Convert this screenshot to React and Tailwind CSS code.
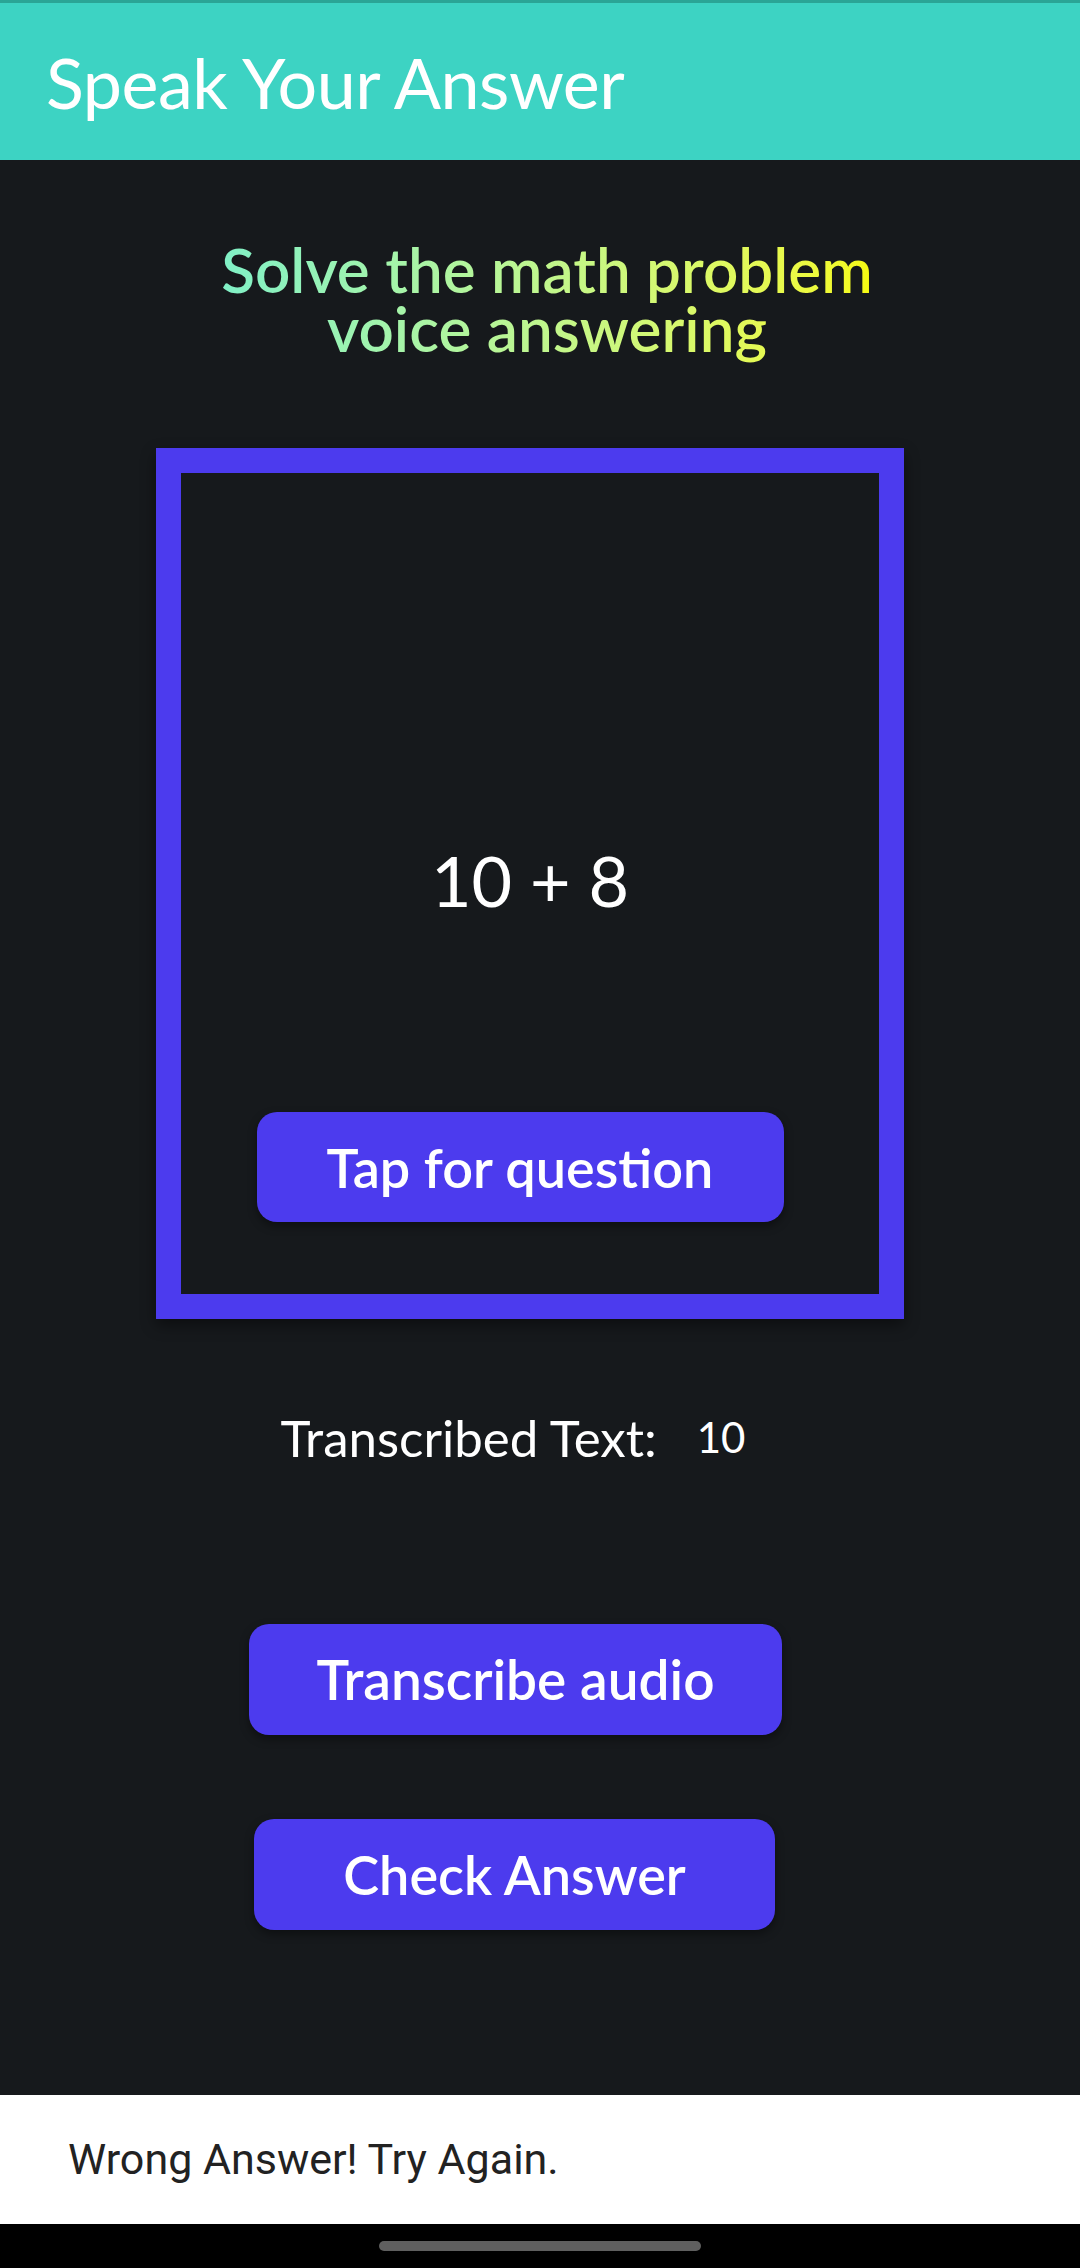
export default function App() {
  const lato = { fontFamily: 'Lato, "Open Sans", sans-serif' };
  return (
    <div className="w-[1080px] h-[2268px] flex flex-col bg-[#16191c] overflow-hidden" style={lato}>
      <div className="h-[3px] bg-[#2aa596]" />
      <div className="h-[157px] bg-[#3dd3c3] flex items-center pl-[46px] shrink-0">
        <span className="text-white text-[70px] leading-none font-normal tracking-[-0.5px]">Speak Your Answer</span>
      </div>
      <div className="flex-1 flex flex-col items-center">
        <div className="mt-[80px] ml-[14px] pb-[14px] text-center text-[62px] leading-[59px] font-semibold bg-gradient-to-r from-[#80f0c6] to-[#f6fa08] bg-clip-text text-transparent w-fit">
          Solve the math problem
          <br />
          voice answering
        </div>
        <div className="mt-[76px] w-[748px] h-[871px] border-[25px] border-[#4c3bee] shadow-[0_6px_14px_rgba(0,0,0,0.45)] flex flex-col items-center ml-[-20px]">
          <div className="mt-[367px] h-[80px] leading-[80px] text-white text-[70px] font-normal">10 + 8</div>
          <button className="mt-[192px] mr-[20px] w-[527px] h-[110px] rounded-[20px] bg-[#4c3bee] text-white text-[54px] font-semibold shadow-[0_4px_10px_rgba(0,0,0,0.4)]">
            Tap for question
          </button>
        </div>
        <div className="mt-[90px] h-[56px] flex items-center ml-[-54px]">
          <span className="text-white text-[51px] leading-none">Transcribed Text:</span>
          <span className="text-white text-[42px] leading-none ml-[40px]">10</span>
        </div>
        <button className="mt-[159px] ml-[-49px] w-[533px] h-[111px] rounded-[20px] bg-[#4c3bee] text-white text-[55px] font-semibold shadow-[0_4px_10px_rgba(0,0,0,0.4)]">
          Transcribe audio
        </button>
        <button className="mt-[84px] ml-[-51px] w-[521px] h-[111px] rounded-[20px] bg-[#4c3bee] text-white text-[54px] font-semibold shadow-[0_4px_10px_rgba(0,0,0,0.4)]">
          Check Answer
        </button>
      </div>
      <div className="h-[129px] bg-white flex items-center pl-[68px] shrink-0">
        <span className="text-[#222222] text-[43px] [font-family:Roboto,sans-serif]">Wrong Answer! Try Again.</span>
      </div>
      <div className="h-[44px] bg-black flex items-center justify-center shrink-0">
        <div className="w-[322px] h-[10px] rounded-full bg-[#5f5f5f]" />
      </div>
    </div>
  );
}
